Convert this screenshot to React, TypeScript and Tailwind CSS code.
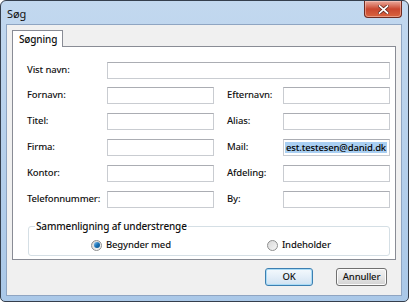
import React from 'react'

const font = { fontFamily: '"Noto Sans", "Open Sans", "Liberation Sans", sans-serif' }

function TextBox({ w, value }: { w: string; value?: string }) {
  return (
    <div
      className={`${w} h-[17px] border border-[#c9ccd1] border-t-[#abadb3] bg-white flex items-center pl-[1px] overflow-hidden`}
    >
      {value && (
        <span className="bg-[#a9cff2] text-black text-[9.5px] leading-[11px] whitespace-nowrap px-[1px]">{value}</span>
      )}
    </div>
  )
}

function Row({ left, right }: { left: string; right: string }) {
  return (
    <div className="flex items-center h-[17px]">
      <span className="w-[80px]">{left}</span>
      <TextBox w="w-[107px]" />
      <span className="w-[56px] ml-[13px]">{right}</span>
      <TextBox w="w-[107px]" value={right === 'Mail:' ? 'est.testesen@danid.dk' : undefined} />
    </div>
  )
}

function Radio({ checked, label }: { checked?: boolean; label: string }) {
  return (
    <label className="flex items-center gap-[4px]">
      <span className="w-[11px] h-[11px] rounded-full border border-[#8e8f8f] bg-gradient-to-br from-[#d8d8d8] to-[#f6f6f6] flex items-center justify-center">
        {checked && (
          <span className="w-[6px] h-[6px] rounded-full bg-gradient-to-br from-[#7ec2f0] via-[#1a74b8] to-[#0d4f85]" />
        )}
      </span>
      {label}
    </label>
  )
}

export default function App() {
  const rows: [string, string][] = [
    ['Fornavn:', 'Efternavn:'],
    ['Titel:', 'Alias:'],
    ['Firma:', 'Mail:'],
    ['Kontor:', 'Afdeling:'],
    ['Telefonnummer:', 'By:'],
  ]

  return (
    <div className="w-[410px] h-[302px] bg-white" style={font}>
      <div className="w-[409px] h-[302px] flex flex-col rounded-t-[6px] rounded-b-[5px] border border-[#353f4d] bg-gradient-to-b from-[#c2d8ef] to-[#aac8e8] pl-[5px] pr-[6px] pb-[5px] text-[#111] text-[9.5px] font-medium tracking-[-0.15px]">
        {/* title bar */}
        <div className="h-[23px] flex items-start justify-between">
          <span className="text-[11px] leading-[14px] mt-[6px] ml-[1px] font-normal">Søg</span>
          <button className="w-[38px] h-[17px] rounded-b-[4px] border border-t-0 border-[#6e2a20] bg-gradient-to-b from-[#e9a99c] via-[#c9462f] to-[#d9643f] flex items-center justify-center shadow-[inset_0_0_0_1px_rgba(255,220,210,0.45)]">
            <svg width="11" height="9" viewBox="0 0 11 9">
              <path d="M1.5 1 L9.5 8 M9.5 1 L1.5 8" stroke="#5a2118" strokeWidth="3.2" strokeLinecap="square" />
              <path d="M1.5 1 L9.5 8 M9.5 1 L1.5 8" stroke="#ffffff" strokeWidth="1.7" strokeLinecap="square" />
            </svg>
          </button>
        </div>

        {/* client area */}
        <div className="flex-1 flex flex-col bg-[#f0f0f0] border border-[#8fa5c2]">
          <div className="pt-[5px] pl-[5px]">
            <div className="relative z-10 -mb-px w-[51px] h-[17px] bg-white border border-b-0 border-[#898c95] text-[10px] leading-[16px] pl-[6px]">
              Søgning
            </div>
          </div>
          <div className="ml-[5px] mr-[5px] h-[214px] bg-white border border-[#898c95] pl-[14px] pt-[15px] flex flex-col">
            <div className="flex items-center h-[17px]">
              <span className="w-[80px]">Vist navn:</span>
              <TextBox w="w-[283px]" />
            </div>
            <div className="mt-[8px] flex flex-col gap-[9px]">
              {rows.map(([l, r]) => (
                <Row key={l} left={l} right={r} />
              ))}
            </div>
            <fieldset className="mt-[12px] ml-[1px] w-[362px] border border-[#d5dfe5] rounded-[3px] px-[6px] pb-[4px]">
              <legend className="text-[10px] leading-[12px] px-[1px]">Sammenligning af understrenge</legend>
              <div className="flex items-center h-[12px] mt-[7px] pl-[56px]">
                <Radio checked label="Begynder med" />
                <div className="ml-[96px]">
                  <Radio label="Indeholder" />
                </div>
              </div>
            </fieldset>
          </div>
          <div className="flex justify-end gap-[23px] mt-[8px] pr-[14px]">
            <button className="w-[48px] h-[18px] rounded-[3px] border border-[#3c7fb1] bg-gradient-to-b from-[#f4f9fd] via-[#e3eef8] to-[#cfe2f1] shadow-[inset_0_0_0_1px_#a9dbf6]">
              OK
            </button>
            <button className="w-[51px] h-[18px] rounded-[3px] border border-[#707070] bg-gradient-to-b from-[#f2f2f2] via-[#e6e6e6] to-[#d2d2d2] shadow-[inset_0_0_0_1px_#fcfcfc]">
              Annuller
            </button>
          </div>
        </div>
      </div>
    </div>
  )
}
